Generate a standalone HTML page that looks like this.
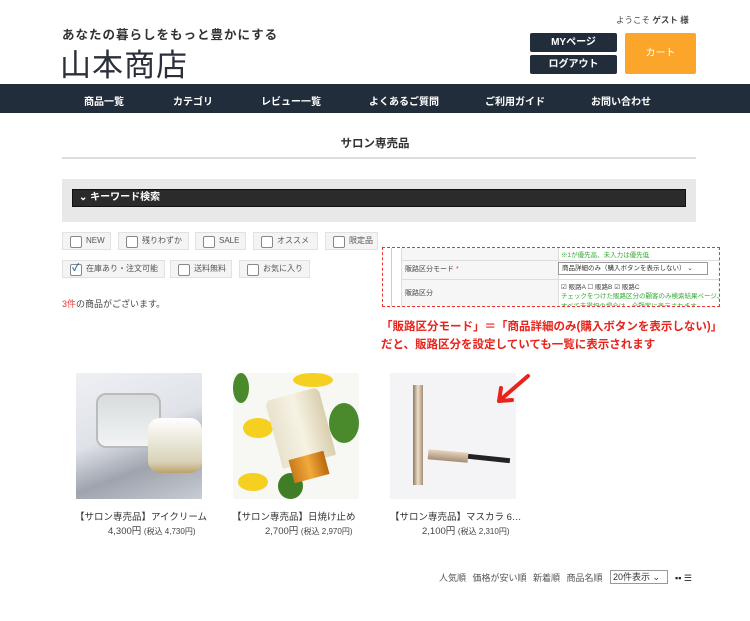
<!DOCTYPE html>
<html><head><meta charset="utf-8"><style>
*{margin:0;padding:0;box-sizing:border-box}
body{width:750px;height:621px;background:#fff;font-family:"Liberation Sans","Noto Sans CJK JP",sans-serif;color:#333;position:relative;overflow:hidden}
.a{position:absolute;white-space:nowrap}
.btn{position:absolute;background:#222d3c;color:#fff;font-size:10px;font-weight:bold;text-align:center;border-radius:2px}
.nav span{position:absolute;top:93px;color:#fff;font-size:10px;font-weight:bold;transform:translateX(-50%)}
.cb{position:absolute;height:18px;background:#f4f4f4;border:1px solid #e2e2e2;font-size:8px;color:#555;padding-left:23px;line-height:16px;white-space:nowrap;overflow:hidden}
.cb:before{content:"";position:absolute;left:7px;top:3px;width:10px;height:10px;border:1px solid #888;border-radius:2px;background:#fff}
.ck:after{content:"✓";position:absolute;left:9px;top:0;color:#2a6fb8;font-size:10px;font-weight:bold}
.img{position:absolute;top:373px;width:126px;height:126px;overflow:hidden}
.t{position:absolute;top:509px;font-size:9.5px;color:#333}
.p{position:absolute;top:523px;font-size:9.5px;color:#444}
.p small{font-size:8px}
</style></head><body>
<div class="a" style="left:62px;top:24px;font-size:12.5px;font-weight:bold;color:#333;letter-spacing:1px">あなたの暮らしをもっと豊かにする</div>
<div class="a" style="left:60px;top:40px;font-size:31px;color:#2a2f3a;letter-spacing:1px">山本商店</div>
<div class="a" style="left:616px;top:14px;font-size:8.5px;color:#444">ようこそ <b>ゲスト 様</b></div>
<div class="btn" style="left:530px;top:33px;width:87px;height:19px;line-height:19px">MYページ</div>
<div class="btn" style="left:530px;top:55px;width:87px;height:19px;line-height:19px">ログアウト</div>
<div class="a" style="left:625px;top:33px;width:71px;height:41px;background:#fba62b;color:#fff;font-size:10px;text-align:center;line-height:41px;border-radius:2px">カート</div>
<div class="a nav" style="left:0;top:84px;width:750px;height:29px;background:#222d3c"></div>
<div class="nav"><span style="left:104px">商品一覧</span><span style="left:193px">カテゴリ</span><span style="left:291px">レビュー一覧</span><span style="left:404px">よくあるご質問</span><span style="left:515px">ご利用ガイド</span><span style="left:621px">お問い合わせ</span></div>
<div class="a" style="left:0;width:750px;text-align:center;top:135px;font-size:11.5px;font-weight:bold;color:#333">サロン専売品</div>
<div class="a" style="left:62px;top:157px;width:634px;height:2px;background:#ddd"></div>
<div class="a" style="left:62px;top:179px;width:634px;height:43px;background:#e8e8e8"></div>
<div class="a" style="left:72px;top:189px;width:614px;height:18px;background:#2b2b2b;border:1px solid #111;color:#fff;font-size:10px;font-weight:bold;line-height:16px;padding-left:6px">⌄ キーワード検索</div>
<div class="cb" style="left:62px;top:232px;width:49px">NEW</div>
<div class="cb" style="left:118px;top:232px;width:71px">残りわずか</div>
<div class="cb" style="left:195px;top:232px;width:51px">SALE</div>
<div class="cb" style="left:253px;top:232px;width:65px">オススメ</div>
<div class="cb" style="left:325px;top:232px;width:53px">限定品</div>
<div class="cb ck" style="left:62px;top:260px;width:103px">在庫あり・注文可能</div>
<div class="cb" style="left:170px;top:260px;width:62px">送料無料</div>
<div class="cb" style="left:239px;top:260px;width:71px">お気に入り</div>
<div class="a" style="left:62px;top:297px;font-size:9px;color:#444"><span style="color:#e33">3件</span>の商品がございます。</div>
<div class="a" style="left:382px;top:247px;width:338px;height:60px;border:1px dashed #e33;background:#fff;overflow:hidden">
 <div class="a" style="left:8px;top:0;width:0;height:60px;border-left:1px solid #ccc"></div>
 <div class="a" style="left:18px;top:0;width:320px;height:60px;border-left:1px solid #ddd;background:#f6f6f6"></div>
 <div class="a" style="left:175px;top:0;width:160px;height:60px;background:#fff;border-left:1px solid #ddd"></div>
 <div class="a" style="left:18px;top:12px;width:320px;border-top:1px solid #ddd"></div>
 <div class="a" style="left:18px;top:31px;width:320px;border-top:1px solid #ddd"></div>
 <div class="a" style="left:178px;top:1px;font-size:6.5px;color:#3a3">※1が優先高、未入力は優先低</div>
 <div class="a" style="left:22px;top:16px;font-size:7px;color:#444">販路区分モード <span style="color:#e33">*</span></div>
 <div class="a" style="left:175px;top:14px;width:150px;height:13px;border:1px solid #999;font-size:6.5px;line-height:11px;padding-left:3px;background:#fff">商品詳細のみ（購入ボタンを表示しない） ⌄</div>
 <div class="a" style="left:22px;top:40px;font-size:7px;color:#444">販路区分</div>
 <div class="a" style="left:178px;top:33px;font-size:6.5px;color:#444">☑ 販路A ☐ 販路B ☑ 販路C</div>
 <div class="a" style="left:178px;top:42px;font-size:6.5px;color:#3a3">チェックをつけた販路区分の顧客のみ検索結果ページ、<br>すべて未選択の場合は、全顧客に表示されます。</div>
</div>
<div class="a" style="left:381px;top:318px;font-size:11.5px;font-weight:bold;color:#e8231c;line-height:18px">「販路区分モード」＝「商品詳細のみ(購入ボタンを表示しない)」<br>だと、販路区分を設定していても一覧に表示されます</div>
<div class="img" style="left:76px;background:linear-gradient(160deg,#eef0f4 0%,#dfe2e8 45%,#9ea3ad 70%,#c8ccd3 100%)">
 <div class="a" style="left:20px;top:20px;width:65px;height:55px;border-radius:10px;background:linear-gradient(#d8dcdc,#f2f4f4);border:2px solid #bbb"></div>
 <div class="a" style="left:72px;top:45px;width:54px;height:55px;border-radius:12px;background:linear-gradient(#fff,#d9d2b8 80%,#b9a26a)"></div>
</div>
<div class="img" style="left:233px;background:#f7f7f4">
 <div class="a" style="left:0;top:0;width:16px;height:30px;background:#4a8a2c;border-radius:50%"></div>
 <div class="a" style="left:60px;top:0;width:40px;height:14px;background:#f6d020;border-radius:50%"></div>
 <div class="a" style="left:10px;top:45px;width:30px;height:20px;background:#f6d020;border-radius:50%"></div>
 <div class="a" style="left:96px;top:30px;width:30px;height:40px;background:#4a8a2c;border-radius:50%"></div>
 <div class="a" style="left:45px;top:100px;width:25px;height:26px;background:#3f7d27;border-radius:50%"></div>
 <div class="a" style="left:5px;top:100px;width:30px;height:18px;background:#f6d020;border-radius:50%"></div>
 <div class="a" style="left:40px;top:20px;width:55px;height:70px;background:linear-gradient(90deg,#e8e2cd,#f7f3e4,#d9cfae);transform:rotate(-15deg);border-radius:6px 6px 2px 2px"></div>
 <div class="a" style="left:58px;top:82px;width:36px;height:24px;background:linear-gradient(90deg,#c97a1a,#f2a93b,#b8680f);transform:rotate(-15deg)"></div>
</div>
<div class="img" style="left:390px;background:#f4f4f6">
 <div class="a" style="left:23px;top:12px;width:10px;height:100px;background:linear-gradient(90deg,#8d7a64,#f0dfcc,#a48d74)"></div>
 <div class="a" style="left:38px;top:78px;width:40px;height:10px;background:linear-gradient(#e8d3bd,#a48d74);transform:rotate(5deg)"></div>
 <div class="a" style="left:78px;top:83px;width:42px;height:5px;background:#222;transform:rotate(6deg)"></div>
</div>
<svg class="a" style="left:490px;top:370px;z-index:5" width="45" height="40"><path d="M38 6 L9 31 M9 31 L11 18 M9 31 L22 30" stroke="#e8231c" stroke-width="4" fill="none" stroke-linecap="round"/></svg>
<div class="t" style="left:75px">【サロン専売品】アイクリーム</div>
<div class="p" style="left:108px">4,300円 <small>(税込 4,730円)</small></div>
<div class="t" style="left:232px">【サロン専売品】日焼け止め</div>
<div class="p" style="left:265px">2,700円 <small>(税込 2,970円)</small></div>
<div class="t" style="left:390px">【サロン専売品】マスカラ 6…</div>
<div class="p" style="left:422px">2,100円 <small>(税込 2,310円)</small></div>
<div class="a" style="left:439px;top:571px;font-size:9px;color:#555;word-spacing:4px">人気順 価格が安い順 新着順 商品名順</div>
<div class="a" style="left:610px;top:570px;width:58px;height:14px;border:1px solid #999;font-size:9px;line-height:12px;padding-left:2px">20件表示 ⌄</div>
<div class="a" style="left:675px;top:573px;font-size:9px;color:#222">▪▪ ☰</div>
</body></html>
